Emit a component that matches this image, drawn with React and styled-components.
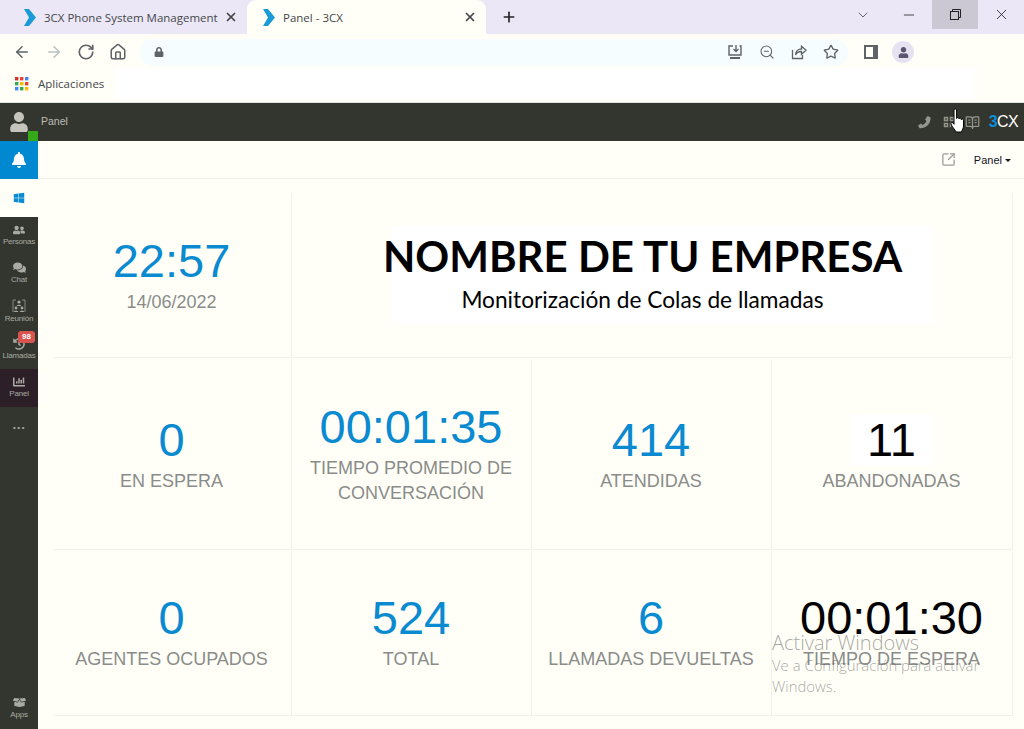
import styled, { createGlobalStyle } from 'styled-components';
import {
  ArrowLeft, ArrowRight, RotateCw, Home, ZoomOut, Star, ChevronDown, Minus, X, Plus, SquareArrowOutUpRight,
} from 'lucide-react';
import {
  FaBell, FaWindows, FaUserFriends, FaComments, FaChartBar, FaUser, FaLock, FaQrcode, FaBoxOpen, FaHistory,
} from 'react-icons/fa';
import { LuBookOpenText } from 'react-icons/lu';

const GlobalStyle = createGlobalStyle`
  html, body {
    margin: 0;
    height: 100%;
    overflow: hidden;
    background: #fffff8;
    font-family: "Liberation Sans", Arial, sans-serif;
  }
  * { box-sizing: border-box; }
`;

const Page = styled.div`
  position: relative;
  display: flex;
  flex-direction: column;
  width: 1024px;
  height: 729px;
  overflow: hidden;
`;

const TabStrip = styled.div`
  display: flex;
  align-items: stretch;
  height: 34px;
  padding-left: 8px;
  background: #ebe7f6;
`;

const Tab = styled.div`
  display: flex;
  align-items: center;
  width: 239px;
  padding: 0 9px 0 15px;
  border-radius: 9px 9px 0 0;
  background: ${(props) => (props.$active ? '#fffff8' : 'transparent')};
  font-family: "Open Sans", sans-serif;
  font-size: 11.5px;
  color: #45474a;
`;

const TabTitle = styled.span`
  flex: 1;
  margin-left: 7px;
  white-space: nowrap;
`;

const NewTab = styled.div`
  display: flex;
  align-items: center;
  margin-left: 15px;
  color: #222;
`;

const WindowControls = styled.div`
  display: flex;
  margin-left: auto;
  height: 29px;
`;

const WindowButton = styled.div`
  display: flex;
  align-items: center;
  justify-content: center;
  width: 46px;
  color: #222;
  background: ${(props) => (props.$hover ? '#cbc7d3' : 'transparent')};
`;

const Toolbar = styled.div`
  display: flex;
  align-items: center;
  height: 34px;
  padding: 2px 0 0 13px;
  background: #fffff8;
  color: #5f6368;
`;

const NavButtons = styled.div`
  display: flex;
  align-items: center;
  gap: 14px;
`;

const AddressBar = styled.div`
  display: flex;
  align-items: center;
  width: 709px;
  height: 27px;
  margin-left: 12px;
  padding: 0 9px 0 12px;
  gap: 14px;
  border-radius: 14px;
  background: #f5fdfe;
`;

const AddressActions = styled.div`
  display: flex;
  align-items: center;
  gap: 16px;
  margin-left: auto;
  color: #5f6368;
`;

const SidePanelIcon = styled.div`
  width: 14px;
  height: 14px;
  margin-left: 16px;
  border: 2px solid #5f6368;
  border-right-width: 5px;
  background: #fffff8;
`;

const Profile = styled.div`
  display: flex;
  align-items: center;
  justify-content: center;
  width: 22px;
  height: 22px;
  margin-left: 14px;
  border-radius: 50%;
  background: #e6e2f2;
  color: #5a5670;
`;

const BookmarksBar = styled.div`
  display: flex;
  align-items: center;
  height: 35px;
  padding: 0 0 3px 15px;
  border-bottom: 1px solid #dfe5e0;
  background: #fffff8;
  font-family: "Open Sans", sans-serif;
  font-size: 11.5px;
  color: #45474a;
`;

const BookmarkLabel = styled.span`
  margin-left: 9px;
`;

const BookmarkFill = styled.div`
  width: 860px;
  height: 31px;
  margin-left: 11px;
  background: #ffffff;
`;

const TopBar = styled.header`
  display: flex;
  align-items: center;
  height: 38px;
  background: #33362e;
  color: #bdbdb6;
`;

const UserBox = styled.div`
  position: relative;
  display: flex;
  align-items: center;
  justify-content: center;
  width: 38px;
  height: 38px;
  color: #c4c4bd;
`;

const StatusDot = styled.span`
  position: absolute;
  right: 0;
  bottom: 0;
  width: 10px;
  height: 10px;
  background: #34a818;
`;

const TopTitle = styled.span`
  margin: 0 0 2px 3px;
  font-size: 10.5px;
`;

const TopActions = styled.div`
  display: flex;
  align-items: center;
  margin-left: auto;
  padding-right: 6px;
  color: #93958d;
`;

const ActionSlot = styled.span`
  display: flex;
  margin-left: ${(props) => props.$gap}px;
`;

const Logo = styled.span`
  margin-left: 9px;
  font-size: 16px;
  letter-spacing: -0.6px;
  color: #ffffff;

  b {
    color: #0a8fd8;
  }
`;

const Body = styled.div`
  display: flex;
  flex: 1;
  min-height: 0;
`;

const Sidebar = styled.nav`
  display: flex;
  flex-direction: column;
  flex: none;
  width: 38px;
  background: #33362e;
`;

const NavItem = styled.div`
  position: relative;
  display: flex;
  flex-direction: column;
  align-items: center;
  justify-content: center;
  height: 38px;
  padding-bottom: ${(props) => (props.$labelled ? '3px' : '0')};
  font-size: 8px;
  letter-spacing: -0.2px;
  color: ${(props) => props.$color || '#a9aaa3'};
  background: ${(props) => props.$bg || 'transparent'};
`;

const NavLabel = styled.span`
  margin-top: 1px;
  line-height: 9px;
  white-space: nowrap;
`;

const Dots = styled.span`
  margin: 2px 0 0 1px;
  font-size: 8px;
  letter-spacing: 1.5px;
`;

const Badge = styled.span`
  position: absolute;
  top: 0;
  left: 18px;
  width: 17px;
  height: 12px;
  border-radius: 3px;
  background: #d9534f;
  font-size: 8px;
  font-weight: 700;
  line-height: 12px;
  letter-spacing: 0;
  text-align: center;
  color: #fff;
`;

const SidebarBottom = styled.div`
  margin-top: auto;
  padding-bottom: 1px;
`;

const Main = styled.main`
  display: flex;
  flex-direction: column;
  flex: 1;
  min-width: 0;
`;

const MainHeader = styled.div`
  display: flex;
  align-items: center;
  justify-content: flex-end;
  flex: none;
  height: 38px;
  padding-right: 13px;
  border-bottom: 1px solid #f0f0e8;
  color: #9a9c99;
`;

const DashboardSelect = styled.span`
  margin: 0 0 0 18px;
  font-size: 11px;
  color: #14141f;

  &::after {
    content: '';
    display: inline-block;
    margin-left: 3px;
    vertical-align: 2px;
    border-top: 3px solid #14141f;
    border-left: 3px solid transparent;
    border-right: 3px solid transparent;
  }
`;

const Dashboard = styled.div`
  display: grid;
  grid-template-columns: 238px 239px 239px 240px;
  grid-template-rows: 165px 190px 164px;
  gap: 1px;
  row-gap: 2px;
  margin: 14px 0 0 16px;
`;

const Cell = styled.section`
  display: flex;
  flex-direction: column;
  align-items: center;
  justify-content: center;
  grid-column: ${(props) => props.$span && `span ${props.$span}`};
  padding: 0 2px ${(props) => props.$lift || 0}px 0;
  border: 1px solid #f1f1e9;
  border-width: 0 1px 1px 0;
`;

const Value = styled.div`
  padding: 0 17px;
  font-size: 47px;
  line-height: 52px;
  color: ${(props) => (props.$dark ? '#000' : '#0a8ad0')};
  background: ${(props) => props.$patch && '#ffffff'};
`;

const Label = styled.div`
  max-width: 225px;
  margin-top: 3px;
  font-size: 18px;
  line-height: 25px;
  text-align: center;
  color: #8a8c8a;
`;

const Banner = styled.div`
  display: flex;
  flex-direction: column;
  align-items: center;
  width: 541px;
  height: 98px;
  margin-left: 21px;
  padding-right: 39px;
  background: #ffffff;
  font-family: Lato, sans-serif;
  color: #000;
`;

const BannerTitle = styled.div`
  margin-top: 4px;
  font-size: 42px;
  font-weight: 700;
  line-height: 52px;
  white-space: nowrap;
`;

const BannerText = styled.div`
  font-size: 22.7px;
  line-height: 36px;
  white-space: nowrap;
`;

const Watermark = styled.div`
  position: absolute;
  left: 772px;
  top: 631px;
  width: 225px;
  font-family: "Open Sans", sans-serif;
  font-size: 14.9px;
  font-weight: 300;
  line-height: 21px;
  color: rgba(90, 90, 90, 0.55);
`;

const WatermarkTitle = styled.div`
  font-size: 20px;
  line-height: 24px;
`;

const Cursor = styled.div`
  position: absolute;
  left: 950px;
  top: 108px;
  display: flex;
`;

const Favicon = () => (
  <svg width="14" height="17" viewBox="0 0 14 17">
    <polygon points="1,0 6,0 13,8.5 6,17 1,17 6,8.5" fill="#1a9ad6" />
  </svg>
);

const AppsGrid = () => {
  const colors = ['#d93025', '#ea4335', '#4285f4', '#34a853', '#fbbc04', '#ea4335', '#4285f4', '#34a853', '#fbbc04'];
  return (
    <svg width="14" height="14" viewBox="0 0 14 14">
      {colors.map((color, index) => (
        <rect key={index} x={(index % 3) * 5} y={Math.floor(index / 3) * 5} width="3.4" height="3.4" fill={color} />
      ))}
    </svg>
  );
};

const InstallIcon = () => (
  <svg width="16" height="16" viewBox="0 0 16 16" fill="none" stroke="currentColor" strokeWidth="1.4">
    <path d="M6 2H2v9h12V2h-1.5" />
    <path d="M9 1v6M6.5 5 9 7.5 11.5 5" />
    <path d="M3 14h10" strokeWidth="2" />
  </svg>
);

const ShareIcon = () => (
  <svg width="16" height="16" viewBox="0 0 16 16" fill="none" stroke="currentColor" strokeWidth="1.3">
    <path d="M1.5 6v8.5h10V11" />
    <path d="M4.5 11c0-4 3-6 6-6V2.2L15 6.2l-4.5 4V7.5c-3 0-5 1-6 3.5z" />
  </svg>
);

const PhoneIcon = () => (
  <svg width="14" height="14" viewBox="0 0 14 14" fill="currentColor">
    <path d="M10.5 1l3 1.2c.6 6.5-4.5 11.5-11 11L1 10.5l3-2 1.6 1.5c1.7-.7 3.2-2.3 3.8-4L8 4.5z" />
  </svg>
);

const RestoreIcon = () => (
  <svg width="11" height="11" viewBox="0 0 11 11" fill="none" stroke="currentColor">
    <rect x="0.5" y="2.5" width="8" height="8" />
    <path d="M2.5 2.5v-2h8v8h-2" />
  </svg>
);

const ReunionIcon = () => (
  <svg width="14" height="14" viewBox="0 0 14 14" fill="currentColor">
    <circle cx="7" cy="3" r="1.6" />
    <path d="M4.8 7c0-1.6 4.4-1.6 4.4 0z" />
    <circle cx="4" cy="9" r="1.4" />
    <circle cx="10" cy="9" r="1.4" />
    <path d="M1.8 13c0-1.8 4.4-1.8 4.4 0zM7.8 13c0-1.8 4.4-1.8 4.4 0z" />
    <path d="M4 1H1v12M10 1h3v12" fill="none" stroke="currentColor" strokeWidth="0.7" />
  </svg>
);

const HandCursor = () => (
  <svg width="17" height="25" viewBox="0 0 17 25" fill="#fff" stroke="#000" strokeWidth="1">
    <path d="M4 2c0-1.5 2.6-1.5 2.6 0v8.5c0-1.2 2.4-1.2 2.4 0v.5c0-1.2 2.3-1.2 2.3.2v.6c0-1.2 2.2-1 2.2.4V18c0 2.5-1.5 4-2 6H6c-1-2.5-4-5-5-8-.5-1.5 1-2.3 2-1l1 1.3z" />
  </svg>
);

const navItems = [
  { label: 'Personas', icon: <FaUserFriends size={12} /> },
  { label: 'Chat', icon: <FaComments size={13} /> },
  { label: 'Reunión', icon: <ReunionIcon /> },
  { label: 'Llamadas', icon: <FaHistory size={12} />, badge: '98' },
  { label: 'Panel', icon: <FaChartBar size={12} />, bg: '#2c1f28' },
];

const stats = [
  { value: '0', label: 'EN ESPERA', lift: 2 },
  { value: '00:01:35', label: 'TIEMPO PROMEDIO DE CONVERSACIÓN', lift: 2 },
  { value: '414', label: 'ATENDIDAS', lift: 2 },
  { value: '11', label: 'ABANDONADAS', dark: true, patch: true, lift: 2 },
  { value: '0', label: 'AGENTES OCUPADOS', lift: 4 },
  { value: '524', label: 'TOTAL', lift: 4 },
  { value: '6', label: 'LLAMADAS DEVUELTAS', lift: 4 },
  { value: '00:01:30', label: 'TIEMPO DE ESPERA', dark: true, lift: 4 },
];

export default function App() {
  return (
    <Page>
      <GlobalStyle />
      <TabStrip>
        <Tab>
          <Favicon />
          <TabTitle>3CX Phone System Management</TabTitle>
          <X size={14} strokeWidth={3} />
        </Tab>
        <Tab $active>
          <Favicon />
          <TabTitle>Panel - 3CX</TabTitle>
          <X size={14} strokeWidth={3} />
        </Tab>
        <NewTab>
          <Plus size={16} strokeWidth={2.5} />
        </NewTab>
        <WindowControls>
          <WindowButton><ChevronDown size={16} strokeWidth={1} /></WindowButton>
          <WindowButton><Minus size={16} strokeWidth={1.2} /></WindowButton>
          <WindowButton $hover><RestoreIcon /></WindowButton>
          <WindowButton><X size={17} strokeWidth={1.2} /></WindowButton>
        </WindowControls>
      </TabStrip>

      <Toolbar>
        <NavButtons>
          <ArrowLeft size={18} strokeWidth={2} />
          <ArrowRight size={18} strokeWidth={2} color="#b9c1c1" />
          <RotateCw size={18} strokeWidth={2.2} />
          <Home size={18} strokeWidth={2} />
        </NavButtons>
        <AddressBar>
          <FaLock size={10} style={{ marginLeft: 3 }} />
          <AddressActions>
            <InstallIcon />
            <ZoomOut size={16} strokeWidth={1.6} />
            <ShareIcon />
            <Star size={16} strokeWidth={2} />
          </AddressActions>
        </AddressBar>
        <SidePanelIcon />
        <Profile><FaUser size={11} /></Profile>
      </Toolbar>

      <BookmarksBar>
        <AppsGrid />
        <BookmarkLabel>Aplicaciones</BookmarkLabel>
        <BookmarkFill />
      </BookmarksBar>

      <TopBar>
        <UserBox>
          <FaUser size={20} />
          <StatusDot />
        </UserBox>
        <TopTitle>Panel</TopTitle>
        <TopActions>
          <PhoneIcon />
          <ActionSlot $gap={12}><FaQrcode size={12} /></ActionSlot>
          <ActionSlot $gap={10}><LuBookOpenText size={15} /></ActionSlot>
          <Logo><b>3</b>CX</Logo>
        </TopActions>
      </TopBar>

      <Body>
        <Sidebar>
          <NavItem $bg="#0088d0" $color="#fff"><FaBell size={16} /></NavItem>
          <NavItem $bg="#fffff8" $color="#0a8ad0"><FaWindows size={12} /></NavItem>
          {navItems.map((item) => (
            <NavItem key={item.label} $bg={item.bg} $labelled>
              {item.icon}
              {item.badge && <Badge>{item.badge}</Badge>}
              <NavLabel>{item.label}</NavLabel>
            </NavItem>
          ))}
          <NavItem><Dots>•••</Dots></NavItem>
          <SidebarBottom>
            <NavItem $labelled>
              <FaBoxOpen size={13} />
              <NavLabel>Apps</NavLabel>
            </NavItem>
          </SidebarBottom>
        </Sidebar>

        <Main>
          <MainHeader>
            <SquareArrowOutUpRight size={15} />
            <DashboardSelect>Panel</DashboardSelect>
          </MainHeader>
          <Dashboard>
            <Cell>
              <Value>22:57</Value>
              <Label>14/06/2022</Label>
            </Cell>
            <Cell $span={3}>
              <Banner>
                <BannerTitle>NOMBRE DE TU EMPRESA</BannerTitle>
                <BannerText>Monitorización de Colas de llamadas</BannerText>
              </Banner>
            </Cell>
            {stats.map((stat) => (
              <Cell key={stat.label} $lift={stat.lift}>
                <Value $dark={stat.dark} $patch={stat.patch}>{stat.value}</Value>
                <Label>{stat.label}</Label>
              </Cell>
            ))}
          </Dashboard>
        </Main>
      </Body>

      <Cursor>
        <HandCursor />
      </Cursor>
      <Watermark>
        <WatermarkTitle>Activar Windows</WatermarkTitle>
        Ve a Configuración para activar Windows.
      </Watermark>
    </Page>
  );
}
